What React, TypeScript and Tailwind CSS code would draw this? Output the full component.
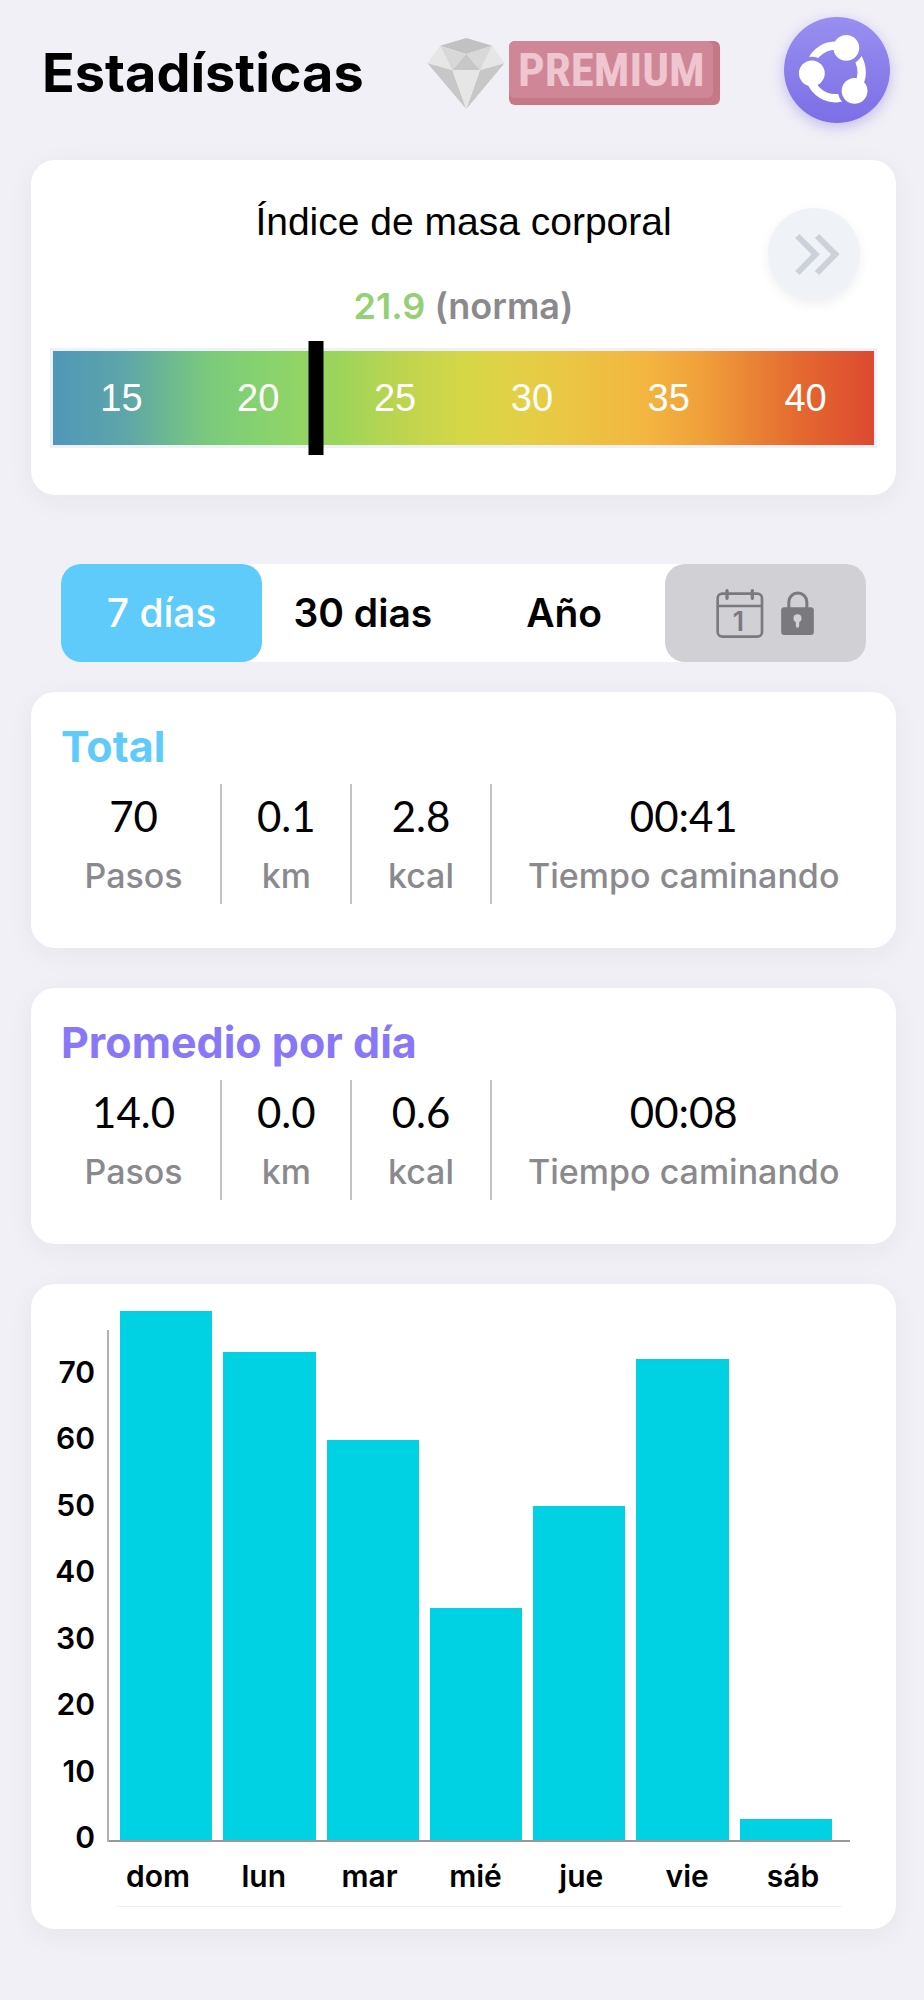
import clsx from "clsx";
import { useState } from "react";

const BMI_LABELS = [15, 20, 25, 30, 35, 40];

const PERIODS = ["7 días", "30 dias", "Año"];

const TOTAL = [
  { value: "70", label: "Pasos" },
  { value: "0.1", label: "km" },
  { value: "2.8", label: "kcal" },
  { value: "00:41", label: "Tiempo caminando" },
];

const AVERAGE = [
  { value: "14.0", label: "Pasos" },
  { value: "0.0", label: "km" },
  { value: "0.6", label: "kcal" },
  { value: "00:08", label: "Tiempo caminando" },
];

const TICKS = [70, 60, 50, 40, 30, 20, 10, 0];

// bar heights in px, the plot is 530px tall
const DAYS = [
  { day: "dom", height: 529 },
  { day: "lun", height: 488 },
  { day: "mar", height: 400 },
  { day: "mié", height: 232 },
  { day: "jue", height: 334 },
  { day: "vie", height: 481 },
  { day: "sáb", height: 21 },
];

const CARD = "rounded-3xl bg-white shadow-[0_6px_28px_rgba(40,40,70,0.05)]";

function DiamondIcon() {
  return (
    <svg viewBox="0 0 232 214" className="h-[71px] w-[78px]" aria-hidden="true">
      <path d="M38 23 117 0l78 23-78 25z" fill="#c1c1c1" />
      <path d="M38 23 0 76l75 21zM195 23l37 53-74 21z" fill="#e6e6e6" />
      <path d="M38 23l79 25-42 49zM195 23l-78 25 41 49z" fill="#d8d8d8" />
      <path d="M117 48 75 97h83zM0 76l75 21 42 117zM232 76l-74 21-41 117z" fill="#c7c7c7" />
      <path d="M75 97h83l-41 117z" fill="#e6e6e6" />
    </svg>
  );
}

function ShareIcon() {
  return (
    <svg viewBox="0 0 320 320" className="h-full w-full" aria-hidden="true">
      <defs>
        <mask id="gap-left" maskUnits="userSpaceOnUse" x="0" y="0" width="320" height="320">
          <rect width="320" height="320" fill="#fff" />
          <circle cx="84" cy="170" r="50" fill="#000" />
        </mask>
        <mask id="gap-top" maskUnits="userSpaceOnUse" x="0" y="0" width="320" height="320">
          <rect width="320" height="320" fill="#fff" />
          <circle cx="188" cy="93" r="52" fill="#000" />
        </mask>
        <mask id="gap-bottom" maskUnits="userSpaceOnUse" x="0" y="0" width="320" height="320">
          <rect width="320" height="320" fill="#fff" />
          <circle cx="213" cy="223" r="50" fill="#000" />
        </mask>
      </defs>
      <g fill="none" stroke="#fff" strokeWidth="25">
        <path d="M76 166A79 79 0 0 1 188 94" mask="url(#gap-left)" />
        <path d="M188 94A79 79 0 0 1 211 222" mask="url(#gap-top)" />
        <path d="M211 222A79 79 0 0 1 76 166" mask="url(#gap-bottom)" />
      </g>
      <g fill="#fff">
        <circle cx="188" cy="93" r="39" />
        <circle cx="84" cy="170" r="39" />
        <circle cx="213" cy="223" r="39" />
      </g>
    </svg>
  );
}

function CalendarIcon() {
  return (
    <svg viewBox="0 0 144 147" className="h-[49px] w-12" fill="none" stroke="#7a797e" aria-hidden="true">
      <rect x="5" y="14" width="133" height="129" rx="14" strokeWidth="8" />
      <path d="M5 51h133" strokeWidth="8" />
      <path d="M33 5v23M109 5v23" strokeWidth="10" strokeLinecap="round" />
      <text x="67" y="126" textAnchor="middle" fill="#7a797e" stroke="none" className="text-[80px] font-semibold">
        1
      </text>
    </svg>
  );
}

function LockIcon() {
  return (
    <svg viewBox="0 0 98 132" className="h-11 w-[33px]" aria-hidden="true">
      <path d="M23 54V33a27 27 0 0 1 54 0v21" fill="none" stroke="#7a797e" strokeWidth="9" />
      <rect y="49" width="98" height="83" rx="9" fill="#7a797e" />
      <path d="M49 83v22" stroke="#d1d0d5" strokeWidth="10" strokeLinecap="round" />
      <circle cx="49" cy="82" r="12" fill="#d1d0d5" />
    </svg>
  );
}

function StatsCard({ title, titleClass, items }: {
  title: string;
  titleClass: string;
  items: { value: string; label: string }[];
}) {
  return (
    <section className={clsx(CARD, "pt-7 pr-5 pb-11 pl-4")}>
      <h2 className={clsx("px-[14px] text-[43px] leading-[52px] font-bold", titleClass)}>{title}</h2>
      <dl className="mt-3 grid grid-cols-[175fr_130fr_139fr_384fr]">
        {items.map((item) => (
          <div
            key={item.label}
            className="flex flex-col-reverse justify-end border-r-2 border-[#c2c2c7] pt-1 pb-2 text-center last:border-r-0"
          >
            <dt className="text-[34px] leading-10 font-medium whitespace-nowrap text-[#8a8a8e]">{item.label}</dt>
            <dd className="mb-3 font-[Lato,sans-serif] text-[42px] leading-[56px]">{item.value}</dd>
          </div>
        ))}
      </dl>
    </section>
  );
}

export default function App() {
  const [period, setPeriod] = useState("7 días");

  return (
    <main className="min-h-screen bg-[#f1f0f6] pb-[70px] font-[Inter,'Liberation_Sans',sans-serif] text-black">
      <header className="flex items-center justify-between pt-[17px] pr-[34px] pl-[42px]">
        <h1 className="pt-1.5 text-[54px] leading-[64px] font-bold">Estadísticas</h1>
        <button type="button" className="flex items-center gap-1 pt-1.5" aria-label="Premium">
          <DiamondIcon />
          <span className="rounded-md bg-[#c67884] pr-[7px] pb-[7px]">
            <span className="block w-[204px] rounded-md bg-[#cf8797] text-center font-['Roboto_Condensed',Roboto,sans-serif] text-[47px] leading-[57px] font-bold text-[#efc5d0]">
              PREMIUM
            </span>
          </span>
        </button>
        <button
          type="button"
          aria-label="Compartir"
          className="size-[106px] rounded-full bg-linear-to-b from-[#988ff0] to-[#7d6ee6] shadow-[0_4px_14px_rgba(125,110,230,0.4)]"
        >
          <ShareIcon />
        </button>
      </header>

      <div className="pr-7 pl-[31px]">
        <section className={clsx(CARD, "relative mt-[37px] px-[19px] pt-10 pb-[47px] text-center")}>
          <h2 className="font-['Liberation_Sans',sans-serif] text-[39px] leading-[44px]">Índice de masa corporal</h2>
          <p className="mt-[38px] text-[36px] leading-[48px] font-semibold text-[#8a8a8e]">
            <span className="text-[#93d174]">21.9</span> (norma)
          </p>
          <button
            type="button"
            aria-label="Ver más"
            className="absolute top-12 right-9 size-[92px] rounded-full bg-[#eff3f8] shadow-[0_4px_12px_rgba(0,0,0,0.07)]"
          >
            <svg viewBox="0 0 276 276" className="h-full w-full" fill="none" stroke="#cdd1da" strokeWidth="18" aria-hidden="true">
              <path d="M88 84l55 55-55 56M147 84l55 55-55 56" />
            </svg>
          </button>
          <div className="relative mt-[18px] border-3 border-[#eef2f8]">
            <div className="grid grid-cols-6 bg-[linear-gradient(90deg,#5097b9_0%,#5ea6a8_9%,#7bca7c_19%,#86d270_25%,#9dd55b_35%,#bcd44f_42%,#d5d747_50%,#e5ce45_58%,#f3b640_72%,#f0a03a_79%,#e46830_91%,#dd4a30_100%)]">
              {BMI_LABELS.map((label) => (
                <span key={label} className="font-['Liberation_Sans',sans-serif] text-[38px] leading-[94px] text-white">
                  {label}
                </span>
              ))}
            </div>
            <span className="absolute -inset-y-[10px] left-[32%] w-[15px] -translate-x-1/2 bg-black" />
          </div>
        </section>

        <div className="mx-[30px] mt-[69px] grid h-[98px] grid-cols-4 rounded-[20px] bg-white text-[39px] font-semibold">
          {PERIODS.map((name) => (
            <button
              key={name}
              type="button"
              onClick={() => setPeriod(name)}
              className={clsx("rounded-[20px]", period === name && "bg-[#5ecbfb] font-medium text-white")}
            >
              {name}
            </button>
          ))}
          <button
            type="button"
            aria-label="Elegir fechas"
            className="flex items-center justify-center gap-[17px] rounded-[20px] bg-[#d1d0d5]"
          >
            <CalendarIcon />
            <LockIcon />
          </button>
        </div>

        <div className="mt-[30px] flex flex-col gap-10">
          <StatsCard title="Total" titleClass="text-[#5ecbfb]" items={TOTAL} />
          <StatsCard title="Promedio por día" titleClass="text-[#8878f8]" items={AVERAGE} />

          <section className={clsx(CARD, "pt-[26px] pr-[46px] pb-[22px] pl-4 text-[30px] leading-[30px] font-semibold")}>
            <div className="flex items-end">
              <div className="-mb-[10px] flex h-[495px] w-12 shrink-0 flex-col justify-between text-right">
                {TICKS.map((tick) => (
                  <span key={tick}>{tick}</span>
                ))}
              </div>
              <div className="ml-3 h-[512px] w-[2px] shrink-0 bg-[#b3b3b5]" />
              <div className="flex h-[532px] grow items-end gap-[11px] border-b-2 border-[#98989b] pr-[18px] pl-[11px]">
                {DAYS.map(({ day, height }) => (
                  <div key={day} className="flex-1 bg-[#00d1e3]" style={{ height }} />
                ))}
              </div>
            </div>
            <div className="mt-4 mr-1 ml-[58px] grid grid-cols-7 text-center leading-9">
              {DAYS.map(({ day }) => (
                <span key={day}>{day}</span>
              ))}
            </div>
            <div className="mt-3 mr-2 ml-[68px] h-[1px] bg-[#eff2f4]" />
          </section>
        </div>
      </div>
    </main>
  );
}
